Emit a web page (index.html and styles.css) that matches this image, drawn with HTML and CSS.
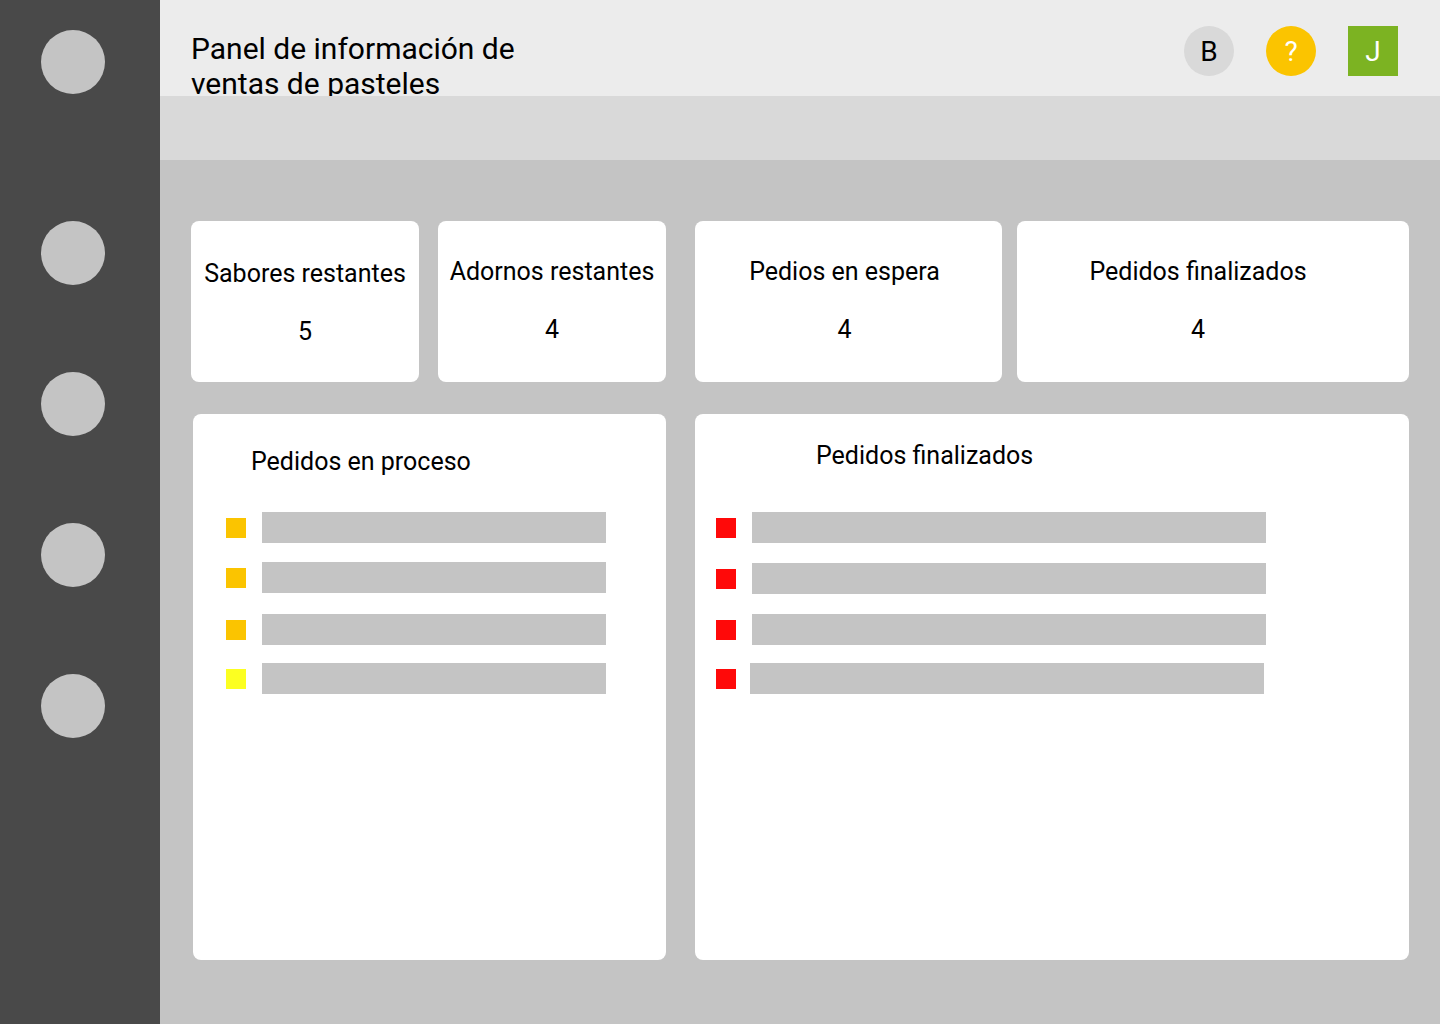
FILE: index.html
```html
<!DOCTYPE html>
<html lang="es">
<head>
<meta charset="utf-8">
<title>Panel de información de ventas de pasteles</title>
<link rel="stylesheet" href="styles.css">
</head>
<body>
<div class="app">
  <nav class="sidebar">
    <span class="nav-dot nav-dot--first"></span>
    <span class="nav-dot"></span>
    <span class="nav-dot"></span>
    <span class="nav-dot"></span>
    <span class="nav-dot"></span>
  </nav>
  <div class="main">
    <header class="topbar">
      <h1 class="title">Panel de información de ventas de pasteles</h1>
      <div class="actions">
        <span class="action action--b">B</span>
        <span class="action action--help">?</span>
        <span class="action action--user">J</span>
      </div>
    </header>
    <div class="band"></div>
    <section class="content">
      <div class="stats">
        <div class="stat stat--1"><div class="stat-label">Sabores restantes</div><div class="stat-value">5</div></div>
        <div class="stat stat--2"><div class="stat-label">Adornos restantes</div><div class="stat-value">4</div></div>
        <div class="stat stat--3"><div class="stat-label">Pedios en espera</div><div class="stat-value">4</div></div>
        <div class="stat stat--4"><div class="stat-label">Pedidos finalizados</div><div class="stat-value">4</div></div>
      </div>
      <div class="panels">
        <div class="panel panel--process">
          <h2 class="panel-title">Pedidos en proceso</h2>
          <ul class="list">
            <li class="row"><span class="mark mark--orange"></span><span class="bar"></span></li>
            <li class="row"><span class="mark mark--orange"></span><span class="bar"></span></li>
            <li class="row"><span class="mark mark--orange"></span><span class="bar"></span></li>
            <li class="row"><span class="mark mark--yellow"></span><span class="bar"></span></li>
          </ul>
        </div>
        <div class="panel panel--done">
          <h2 class="panel-title">Pedidos finalizados</h2>
          <ul class="list">
            <li class="row"><span class="mark mark--red"></span><span class="bar"></span></li>
            <li class="row"><span class="mark mark--red"></span><span class="bar"></span></li>
            <li class="row"><span class="mark mark--red"></span><span class="bar"></span></li>
            <li class="row row--last"><span class="mark mark--red"></span><span class="bar"></span></li>
          </ul>
        </div>
      </div>
    </section>
  </div>
</div>
</body>
</html>
```
FILE: styles.css
```css
* { box-sizing: border-box; }
html, body { margin: 0; padding: 0; }
body {
  font-family: Roboto, "Noto Sans", "Liberation Sans", sans-serif;
  color: #000;
  width: 1440px;
  height: 1024px;
  overflow: hidden;
}
.app { display: flex; width: 1440px; height: 1024px; }

.sidebar {
  width: 160px;
  flex: none;
  background: #494949;
  display: flex;
  flex-direction: column;
  align-items: flex-start;
  padding: 30px 0 0 41px;
  gap: 87px;
}
.nav-dot {
  display: block;
  width: 64px;
  height: 64px;
  border-radius: 50%;
  background: #c4c4c4;
}
.nav-dot--first { margin-bottom: 40px; }

.main {
  flex: 1;
  display: flex;
  flex-direction: column;
  background: #c4c4c4;
}
.topbar {
  height: 96px;
  flex: none;
  background: #ececec;
  display: flex;
  justify-content: space-between;
  align-items: flex-start;
  padding: 0 42px 0 31px;
  overflow: hidden;
}
.title {
  margin: 31px 0 0;
  width: 360px;
  font-size: 30px;
  line-height: 35px;
  font-weight: 400;
}
.actions {
  display: flex;
  gap: 32px;
  padding-top: 26px;
}
.action {
  width: 50px;
  height: 50px;
  display: flex;
  align-items: center;
  justify-content: center;
  font-size: 28px;
  line-height: 1;
  padding-top: 1px;
}
.action--b { background: #d9d9d9; border-radius: 50%; color: #000; }
.action--help { background: #fbc400; border-radius: 50%; color: #fff; }
.action--user { background: #7cb322; color: #fff; }

.band { height: 64px; flex: none; background: #d9d9d9; }

.content { padding: 61px 0 0 31px; }
.stats { display: flex; height: 161px; }
.stat {
  background: #fff;
  border-radius: 8px;
  text-align: center;
  padding-top: 37px;
  font-size: 25px;
  line-height: 28px;
}
.stat--1 { width: 228px; padding-top: 39px; }
.stat--2 { width: 228px; margin-left: 19px; }
.stat--3 { width: 307px; margin-left: 29px; padding-right: 8px; }
.stat--4 { width: 392px; margin-left: 15px; padding-right: 30px; }
.stat-value { margin-top: 30px; }

.panels { display: flex; margin-top: 32px; padding-left: 2px; gap: 29px; }
.panel {
  background: #fff;
  border-radius: 8px;
  height: 546px;
}
.panel--process { width: 473px; padding: 34px 0 0 33px; }
.panel--done { width: 714px; padding: 28px 0 0 21px; }
.panel-title {
  margin: 0;
  font-size: 25px;
  line-height: 28px;
  font-weight: 400;
}
.panel--process .panel-title { padding-left: 25px; }
.panel--done .panel-title { padding-left: 100px; }

.list {
  list-style: none;
  margin: 0;
  padding: 0;
  display: flex;
  flex-direction: column;
  gap: 19px;
}
.panel--process .list { margin-top: 36px; }
.panel--done .list { margin-top: 42px; }
.row { display: flex; align-items: center; gap: 16px; height: 31px; }
.row:nth-child(3) { margin-top: 2px; }
.row:nth-child(4) { margin-top: -1px; }
.panel--done .row:nth-child(2) { margin-top: 1px; }
.panel--done .row:nth-child(3) { margin-top: 1px; }
.row--last { gap: 14px; }
.mark { width: 20px; height: 20px; flex: none; }
.mark--orange { background: #fbc400; }
.mark--yellow { background: #fcff21; }
.mark--red { background: #ff0909; }
.bar { height: 31px; background: #c4c4c4; }
.panel--process .bar { width: 344px; }
.panel--done .bar { width: 514px; }
```
